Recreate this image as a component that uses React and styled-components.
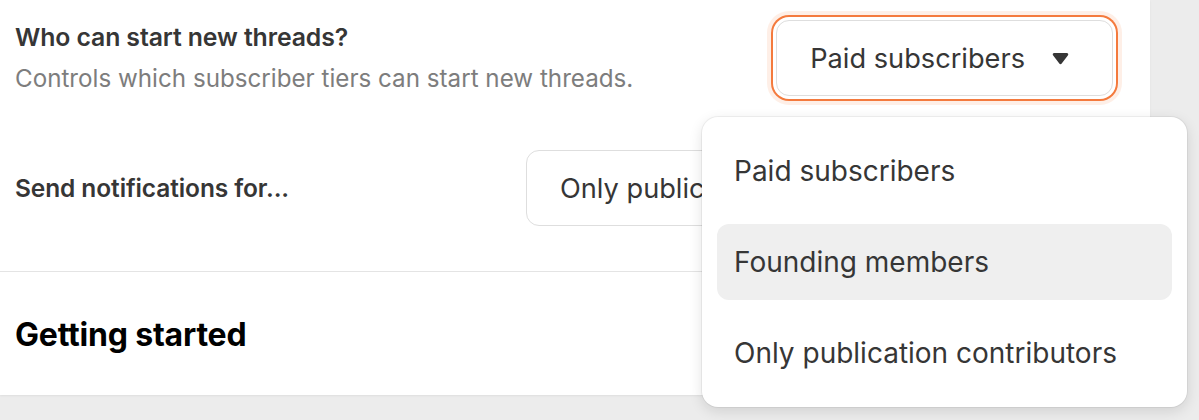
import React from "react";
import styled, { createGlobalStyle } from "styled-components";

const GlobalStyle = createGlobalStyle`
  html, body {
    margin: 0;
    padding: 0;
    background: #ececec;
    font-family: "Inter", "Noto Sans", sans-serif;
    -webkit-font-smoothing: antialiased;
  }
`;

const Page = styled.div`
  width: 1199px;
  height: 420px;
  overflow: hidden;
  background: #ececec;
`;

const Panel = styled.div`
  width: 1150px;
  height: 395px;
  background: #ffffff;
  box-shadow: 0 1px 2px rgba(0, 0, 0, 0.06);
  display: flex;
  flex-direction: column;
`;

const Settings = styled.div`
  padding: 20px 37px 45px 15px;
  display: flex;
  flex-direction: column;
  gap: 54px;
  border-bottom: 1px solid #e4e4e4;
`;

const Row = styled.div`
  display: flex;
  align-items: center;
  justify-content: space-between;
`;

const Label = styled.div`
  display: flex;
  flex-direction: column;
  gap: 12px;
`;

const Title = styled.div`
  font-size: ${(p) => (p.$small ? "24.5px" : "24.8px")};
  line-height: 30px;
  font-weight: 600;
  color: #363636;
  letter-spacing: -0.1px;
`;

const Hint = styled.div`
  font-size: 24.2px;
  line-height: 30px;
  color: #7d7d7d;
`;

const SelectWrap = styled.div`
  position: relative;
`;

const Select = styled.div`
  box-sizing: border-box;
  height: 76px;
  width: ${(p) => p.$width || "auto"};
  display: flex;
  align-items: center;
  gap: 27px;
  padding: 0 43px 0 33px;
  border: 1px solid #dedede;
  border-radius: 13px;
  background: #fff;
  font-size: 27.2px;
  color: #363636;
  white-space: nowrap;
  box-shadow: ${(p) =>
    p.$focused
      ? "0 0 0 3px #fff, 0 0 0 5px #f47a3d, 0 0 0 9px rgba(244, 122, 61, 0.12)"
      : "none"};
`;

const Caret = () => (
  <svg width="17" height="13" viewBox="0 0 17 13">
    <path
      d="M2.2 1h12.6c1.2 0 1.9 1.3 1.2 2.3l-6.3 8.3c-.6.8-1.8.8-2.4 0L1 3.3C.3 2.3 1 1 2.2 1z"
      fill="#363636"
    />
  </svg>
);

const Menu = styled.div`
  position: absolute;
  top: calc(100% + 21px);
  right: -74px;
  width: 485px;
  box-sizing: border-box;
  padding: 16px 15px;
  display: flex;
  flex-direction: column;
  gap: 15px;
  background: #fff;
  border-radius: 16px;
  box-shadow: 0 0 0 1px rgba(0, 0, 0, 0.05), 0 4px 14px rgba(0, 0, 0, 0.12);
  z-index: 2;
`;

const Item = styled.div`
  height: 76px;
  display: flex;
  align-items: center;
  padding-left: 17px;
  border-radius: 12px;
  font-size: 28px;
  color: #363636;
  white-space: nowrap;
  background: ${(p) => (p.$active ? "#efefef" : "transparent")};
`;

const Section = styled.div`
  flex: 1;
  display: flex;
  align-items: center;
  padding: 2px 15px 0;
`;

const Heading = styled.div`
  font-size: 32px;
  font-weight: 700;
  color: #000;
  letter-spacing: -0.2px;
`;

const options = ["Paid subscribers", "Founding members", "Only publication contributors"];

export default function App() {
  return (
    <Page>
      <GlobalStyle />
      <Panel>
        <Settings>
          <Row>
            <Label>
              <Title>Who can start new threads?</Title>
              <Hint>Controls which subscriber tiers can start new threads.</Hint>
            </Label>
            <SelectWrap>
              <Select $focused>
                <span>Paid subscribers</span>
                <Caret />
              </Select>
              <Menu>
                {options.map((o) => (
                  <Item key={o} $active={o === "Founding members"}>
                    {o}
                  </Item>
                ))}
              </Menu>
            </SelectWrap>
          </Row>
          <Row>
            <Title $small>Send notifications for...</Title>
            <Select $width="587px">
              <span>Only publication contributors</span>
              <Caret />
            </Select>
          </Row>
        </Settings>
        <Section>
          <Heading>Getting started</Heading>
        </Section>
      </Panel>
    </Page>
  );
}
